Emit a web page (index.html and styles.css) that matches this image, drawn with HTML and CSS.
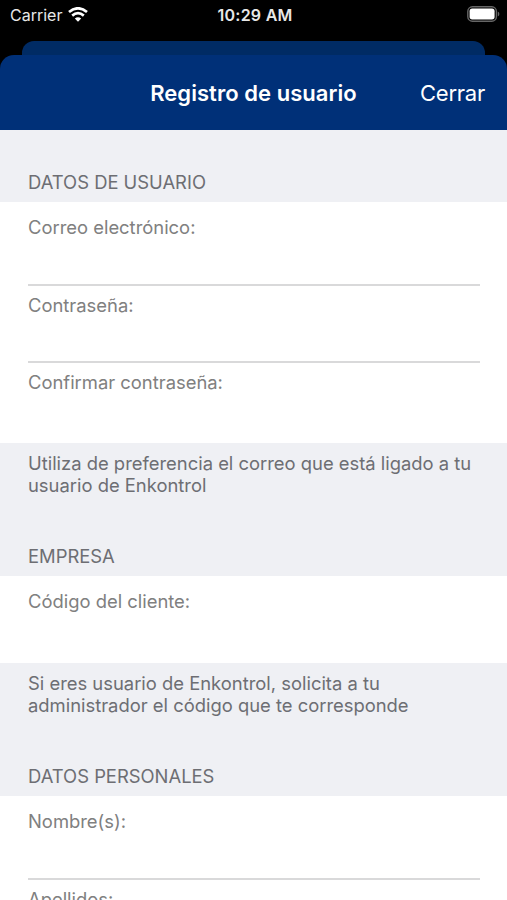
FILE: index.html
```html
<!DOCTYPE html>
<html lang="es">
<head>
<meta charset="utf-8">
<title>Registro de usuario</title>
<link rel="stylesheet" href="styles.css">
</head>
<body>
<header class="status">
  <div class="carrier"><span>Carrier</span>
    <svg class="wifi" viewBox="0 0 20 15"><path d="M1 5Q10-2.4 19 5"/><path d="M4.2 8.6Q10 3.8 15.8 8.6"/><path class="dot" d="M6.8 11.6Q10 8.8 13.2 11.6L10 14.8Z"/></svg>
  </div>
  <span class="time">10:29 AM</span>
  <svg class="battery" viewBox="0 0 33 16"><rect class="shell" x=".8" y=".8" width="28.6" height="14.4" rx="4.6"/><rect class="charge" x="2.6" y="2.6" width="25" height="10.8" rx="2.6"/><path class="tip" d="M30.8 5.5Q32.4 6.2 32.4 8T30.8 10.5Z"/></svg>
</header>
<div class="behind"></div>
<main class="sheet">
  <nav class="bar"><h1 class="title">Registro de usuario</h1><a class="close">Cerrar</a></nav>
  <div class="form">
    <h2 class="heading first">DATOS DE USUARIO</h2>
    <section class="group">
      <div class="field f1"><label>Correo electrónico:</label></div>
      <div class="field f2"><label>Contraseña:</label></div>
      <div class="field f3"><label>Confirmar contraseña:</label></div>
    </section>
    <p class="note">Utiliza de preferencia el correo que está ligado a tu<br>usuario de Enkontrol</p>
    <h2 class="heading">EMPRESA</h2>
    <section class="group"><div class="field f4"><label>Código del cliente:</label></div></section>
    <p class="note">Si eres usuario de Enkontrol, solicita a tu<br>administrador el código que te corresponde</p>
    <h2 class="heading">DATOS PERSONALES</h2>
    <section class="group">
      <div class="field f1"><label>Nombre(s):</label></div>
      <div class="field f2"><label>Apellidos:</label></div>
    </section>
  </div>
</main>
</body>
</html>
```
FILE: styles.css
```css
* { box-sizing: border-box; }
body { margin: 0; height: 900px; overflow: hidden; background: #000; font-family: Inter, sans-serif; font-size: 18.4px; color: #6d6e73; }
.status { height: 41px; padding: 0 7px 0 10px; display: grid; grid-template-columns: 1fr auto 1fr; color: #e8e8e8; line-height: 30px; }
.carrier { display: flex; gap: 6px; font-size: 16px; }
.wifi { width: 20px; height: 15px; margin-top: 7px; fill: none; stroke: #fff; stroke-width: 2.7; }
.wifi .dot { fill: #fff; stroke: none; }
.time { font-size: 16px; font-weight: 600; letter-spacing: .25px; }
.battery { width: 33px; height: 16px; margin-top: 6px; justify-self: end; }
.shell { fill: none; stroke: #666; stroke-width: 1.4; }
.charge { fill: #fff; }
.tip { fill: #666; }
.behind { height: 14px; margin: 0 22px; background: #002b64; border-radius: 12px 12px 0 0; }
.sheet { height: 845px; overflow: hidden; }
.bar { height: 75px; background: #003078; color: #fff; border-radius: 14px 14px 0 0; display: grid; grid-template-columns: 1fr auto 1fr; align-items: center; padding: 0 22px; }
.title { grid-column: 2; margin: 0; font-size: 22px; font-weight: 600; letter-spacing: .05px; }
.close { justify-self: end; font-size: 22px; letter-spacing: -.25px; }
.form { background: #eff0f4; }
.heading { margin: 0; height: 79px; padding: 48px 28px 0; font-size: 18.4px; line-height: 22px; font-weight: 400; }
.first { height: 72px; padding-top: 41px; }
.group { background: #fff; padding-left: 28px; color: #808080; }
.field { margin-right: 27px; padding-top: 14px; line-height: 22px; border-bottom: 2px solid #d9d9da; }
.f1 { height: 84px; }
.f2 { height: 77px; padding-top: 8px; }
.f3 { height: 80px; padding-top: 8px; border: 0; }
.f4 { height: 87px; border: 0; }
.note { margin: 0; height: 54px; padding: 9px 28px 0; line-height: 22px; }
```
